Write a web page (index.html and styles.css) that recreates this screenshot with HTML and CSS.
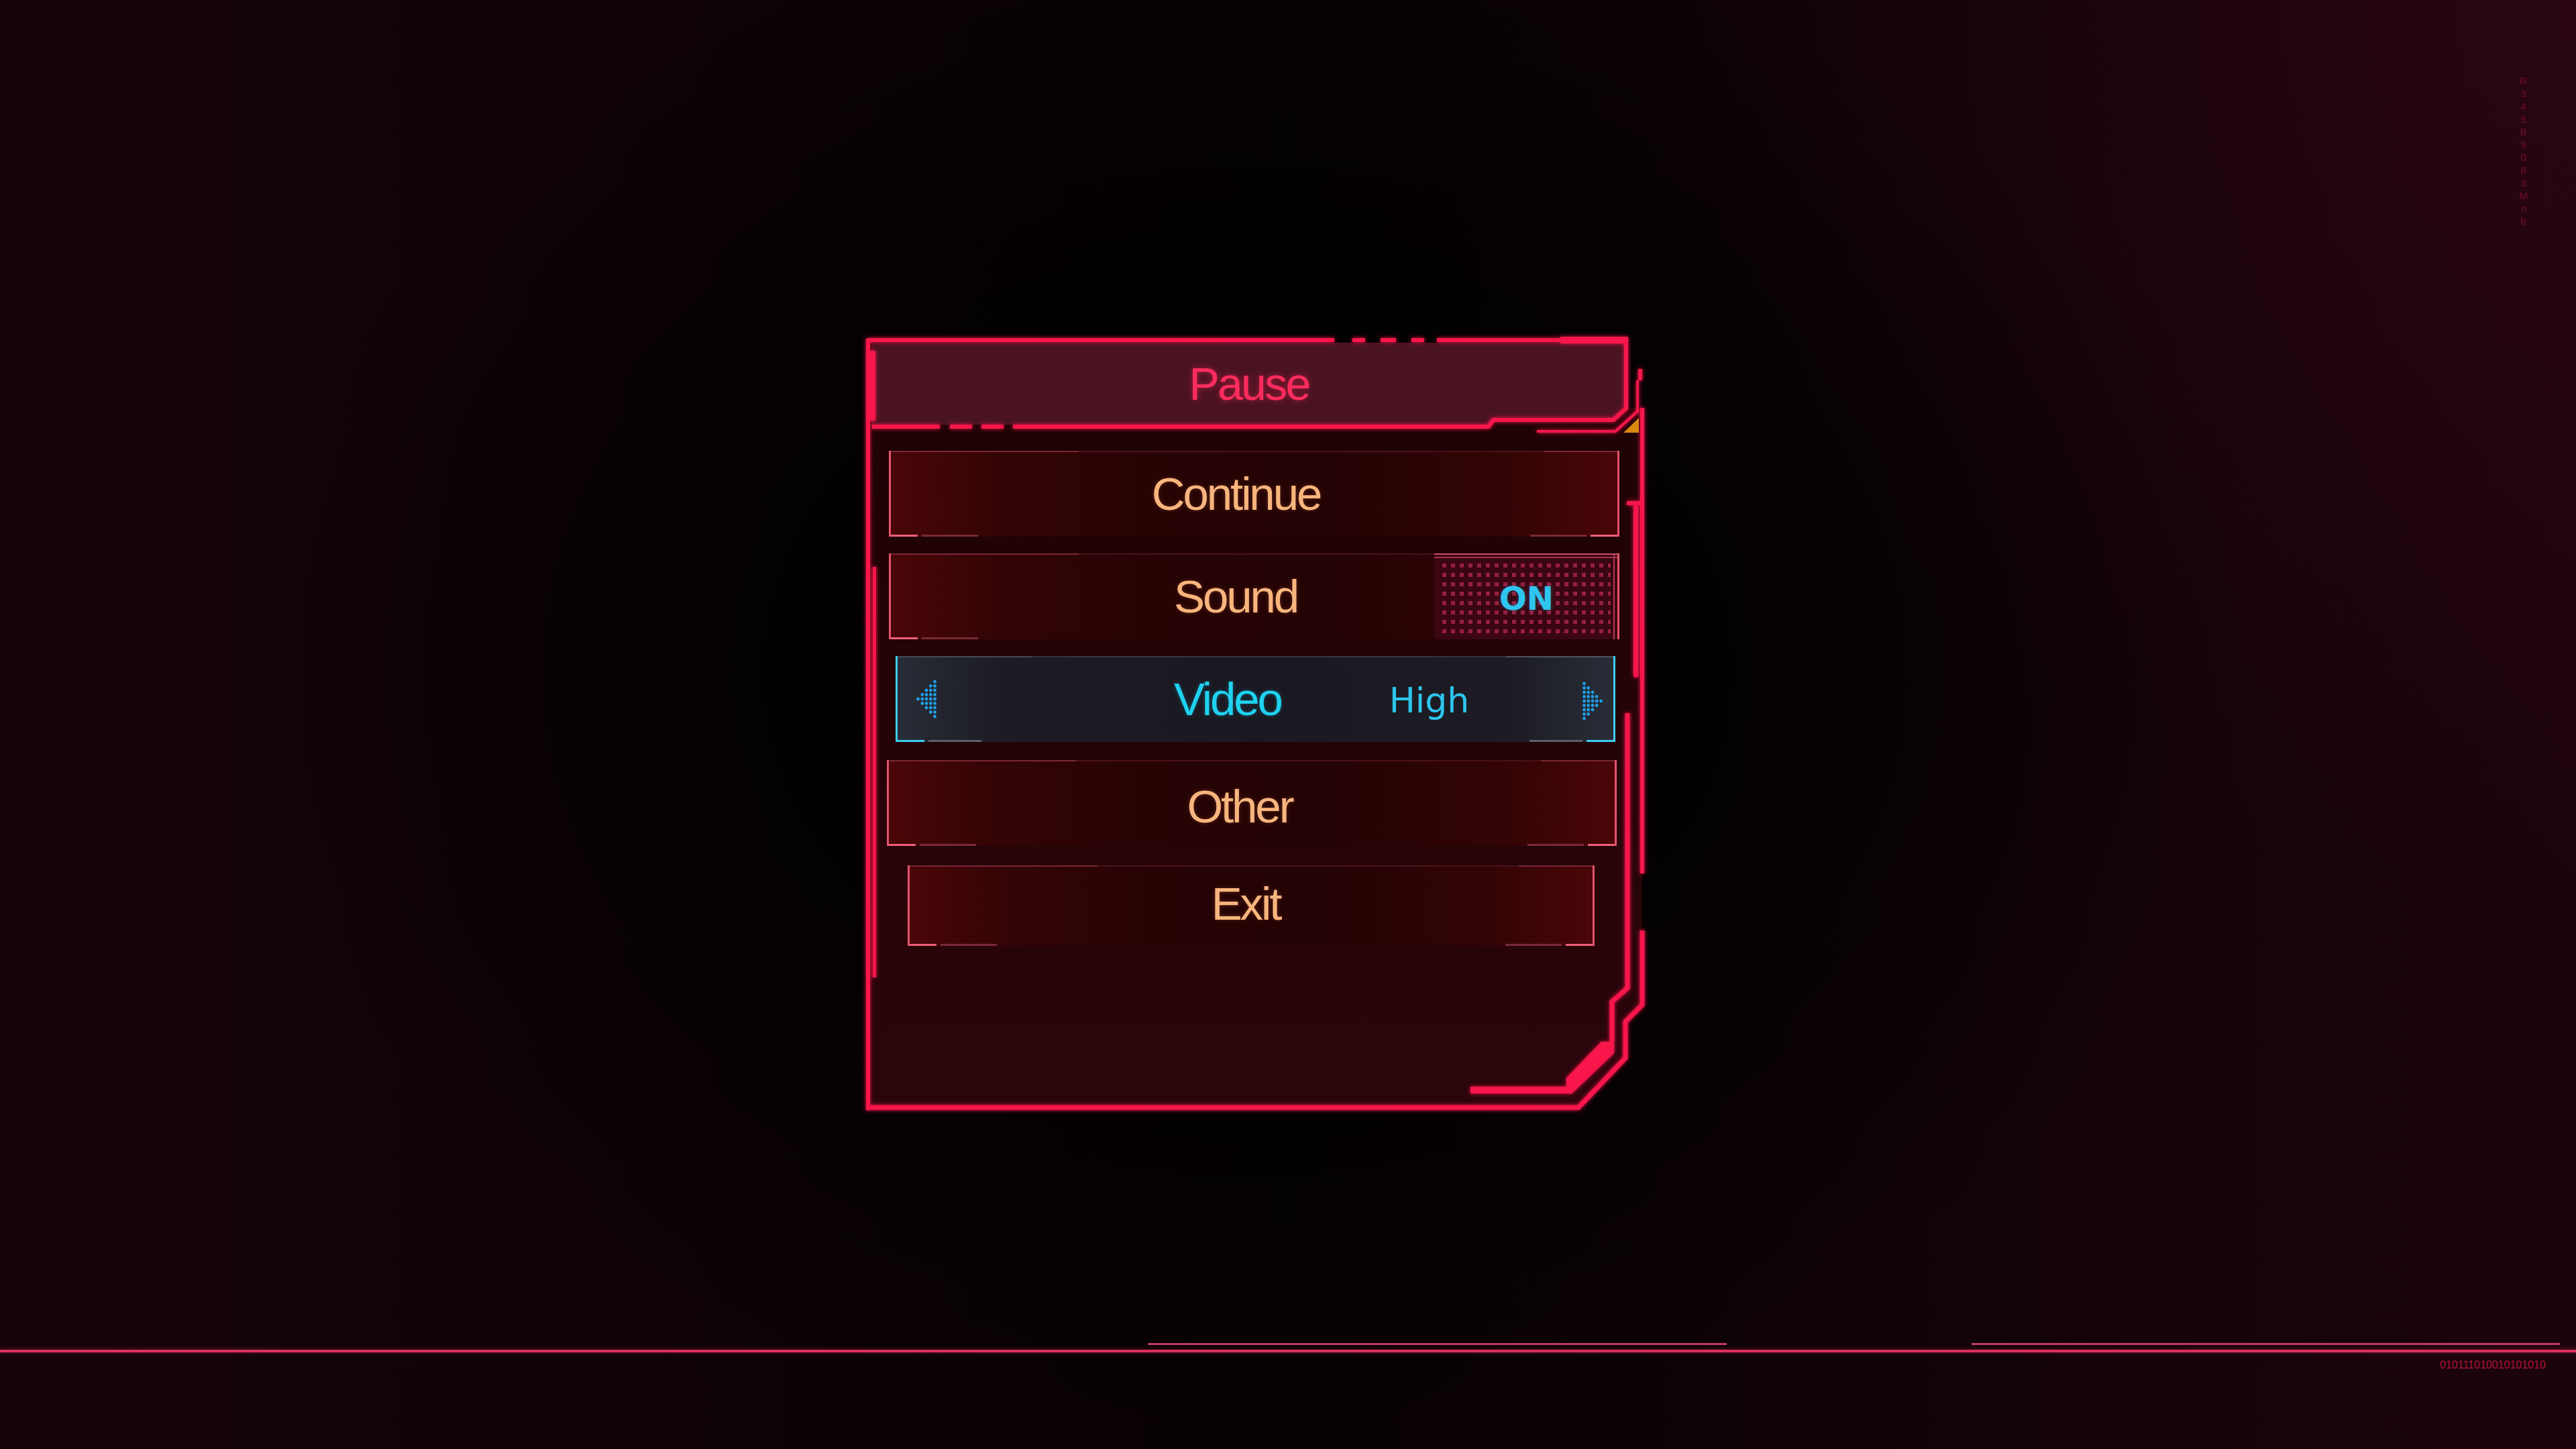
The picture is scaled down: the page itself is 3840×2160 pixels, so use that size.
FILE: index.html
```html
<!DOCTYPE html>
<html lang="en">
<head>
    <meta charset="UTF-8">
    <meta name="viewport" content="width=device-width, initial-scale=1.0">
    <title>Pause</title>
    <link rel="stylesheet" href="styles.css">
</head>
<body>

<div class="screen">
    <div class="stage">

        <!-- Pause panel -->
        <div class="panel">
            <svg class="frame" width="1161" height="1154" viewBox="0 0 1161 1154">
                <defs>
                    <linearGradient id="panelFill" x1="0" y1="0" x2="0" y2="1">
                        <stop offset="0" stop-color="#1d0204"/>
                        <stop offset="1" stop-color="#2b050a"/>
                    </linearGradient>
                    <filter id="glow" x="-5%" y="-5%" width="110%" height="110%">
                        <feGaussianBlur stdDeviation="3" result="blur"/>
                        <feMerge>
                            <feMergeNode in="blur"/>
                            <feMergeNode in="SourceGraphic"/>
                        </feMerge>
                    </filter>
                </defs>

                <polygon fill="url(#panelFill)" points="3,8 1136,8 1136,106 1157,106 1157,996 1134,1021 1134,1075 1062,1150 3,1150"/>
                <polygon fill="#4a1321" points="9,9 1133,9 1133,106 1114,121 935,121 928,131 9,131"/>

                <g filter="url(#glow)" fill="#f8124c" stroke="#f8124c">
                    <!-- top edge -->
                    <path fill="none" stroke-width="6" d="M3 5H698 M725 5H744 M767 5H790 M813 5H832 M851 5H1036"/>
                    <rect x="1035" y="0" width="101" height="10" stroke="none"/>
                    <!-- header right and bottom edge -->
                    <path fill="none" stroke-width="6" d="M1133 8V107L1114 124H935L928 134H219 M205 134H172 M158 134H125 M110 134H9"/>
                    <rect x="0" y="21" width="14" height="104" stroke="none"/>
                    <!-- left rails -->
                    <rect x="0" y="3" width="6" height="1150" stroke="none"/>
                    <rect x="10" y="343" width="5" height="612" stroke="none"/>
                    <!-- outer bottom and right -->
                    <path fill="none" stroke-width="7" d="M3 1149H1062L1132 1075V1021L1157 996V885"/>
                    <path fill="none" stroke-width="6" d="M1157 800V106"/>
                    <!-- right top bits -->
                    <rect x="1151" y="48" width="6" height="17" stroke="none"/>
                    <path fill="none" stroke-width="4" d="M1150 65V111L1117 141H1000"/>
                    <!-- inner right rails -->
                    <rect x="1134" y="245" width="20" height="6" stroke="none"/>
                    <rect x="1144" y="251" width="7" height="257" rx="3" stroke="none"/>
                    <path fill="none" stroke-width="7" d="M1135 561V971L1112 991V1051"/>
                    <polygon stroke="none" points="901,1118 1044,1118 1044,1105 1096,1051 1115,1051 1115,1068 1052,1128 901,1128"/>
                </g>

                <polygon fill="#d8890f" points="1129,143 1152,121 1152,143"/>
            </svg>

            <div class="panel-head">
                <span class="title">Pause</span>
            </div>

            <div class="menu">
                <div class="item item-continue">
                    <span class="label">Continue</span>
                </div>

                <div class="item item-sound">
                    <span class="label">Sound</span>
                    <div class="toggle">
                        <div class="toggle-dots"><span class="toggle-text">ON</span></div>
                    </div>
                </div>

                <div class="item item-video">
                    <svg class="arrow" width="30" height="60" viewBox="0 0 30 60">
                        <g fill="#1f9fe6">
                            <circle cx="2.5" cy="30" r="2.4"/>
                            <circle cx="8.8" cy="23.5" r="2.4"/><circle cx="8.8" cy="30" r="2.4"/><circle cx="8.8" cy="36.5" r="2.4"/>
                            <circle cx="15" cy="17" r="2.4"/><circle cx="15" cy="23.5" r="2.4"/><circle cx="15" cy="30" r="2.4"/><circle cx="15" cy="36.5" r="2.4"/><circle cx="15" cy="43" r="2.4"/>
                            <circle cx="21.3" cy="10.5" r="2.4"/><circle cx="21.3" cy="17" r="2.4"/><circle cx="21.3" cy="23.5" r="2.4"/><circle cx="21.3" cy="30" r="2.4"/><circle cx="21.3" cy="36.5" r="2.4"/><circle cx="21.3" cy="43" r="2.4"/><circle cx="21.3" cy="49.5" r="2.4"/>
                            <circle cx="27.5" cy="4" r="2.4"/><circle cx="27.5" cy="10.5" r="2.4"/><circle cx="27.5" cy="17" r="2.4"/><circle cx="27.5" cy="23.5" r="2.4"/><circle cx="27.5" cy="30" r="2.4"/><circle cx="27.5" cy="36.5" r="2.4"/><circle cx="27.5" cy="43" r="2.4"/><circle cx="27.5" cy="49.5" r="2.4"/><circle cx="27.5" cy="56" r="2.4"/>
                        </g>
                    </svg>
                    <span class="label">Video</span>
                    <span class="value">High</span>
                    <svg class="arrow arrow-right" width="30" height="60" viewBox="0 0 30 60">
                        <g fill="#1f9fe6" transform="translate(30 0) scale(-1 1)">
                            <circle cx="2.5" cy="30" r="2.4"/>
                            <circle cx="8.8" cy="23.5" r="2.4"/><circle cx="8.8" cy="30" r="2.4"/><circle cx="8.8" cy="36.5" r="2.4"/>
                            <circle cx="15" cy="17" r="2.4"/><circle cx="15" cy="23.5" r="2.4"/><circle cx="15" cy="30" r="2.4"/><circle cx="15" cy="36.5" r="2.4"/><circle cx="15" cy="43" r="2.4"/>
                            <circle cx="21.3" cy="10.5" r="2.4"/><circle cx="21.3" cy="17" r="2.4"/><circle cx="21.3" cy="23.5" r="2.4"/><circle cx="21.3" cy="30" r="2.4"/><circle cx="21.3" cy="36.5" r="2.4"/><circle cx="21.3" cy="43" r="2.4"/><circle cx="21.3" cy="49.5" r="2.4"/>
                            <circle cx="27.5" cy="4" r="2.4"/><circle cx="27.5" cy="10.5" r="2.4"/><circle cx="27.5" cy="17" r="2.4"/><circle cx="27.5" cy="23.5" r="2.4"/><circle cx="27.5" cy="30" r="2.4"/><circle cx="27.5" cy="36.5" r="2.4"/><circle cx="27.5" cy="43" r="2.4"/><circle cx="27.5" cy="49.5" r="2.4"/><circle cx="27.5" cy="56" r="2.4"/>
                        </g>
                    </svg>
                </div>

                <div class="item item-other">
                    <span class="label">Other</span>
                </div>

                <div class="item item-exit">
                    <span class="label">Exit</span>
                </div>
            </div>
        </div>

        <div class="serial">R345B9083Mnb</div>
    </div>

    <!-- bottom rails -->
    <div class="footer">
        <div class="rail-upper">
            <span class="rail-seg rail-seg-a"></span>
            <span class="rail-seg rail-seg-b"></span>
        </div>
        <div class="rail-main"></div>
        <div class="binary">010111010010101010</div>
    </div>
</div>

</body>
</html>
```

FILE: styles.css
```css
* {
    margin: 0;
    padding: 0;
    box-sizing: border-box;
}

body {
    background: #000;
    font-family: "Liberation Sans", Arial, sans-serif;
    overflow: hidden;
}

.screen {
    width: 3840px;
    height: 2160px;
    display: flex;
    flex-direction: column;
    background:
        radial-gradient(ellipse 1500px 1150px at 1860px 1000px, #000 0%, rgba(0, 0, 0, 0.8) 45%, rgba(0, 0, 0, 0) 100%),
        radial-gradient(circle at 100% 0%, rgba(56, 8, 24, 0.45), rgba(0, 0, 0, 0) 30%),
        linear-gradient(90deg, #16040a 0%, #0d0205 30%, #070103 50%, #110307 75%, #1d040c 100%);
}

.stage {
    height: 2002px;
    display: flex;
    align-items: flex-start;
}

/* ---------- panel ---------- */

.panel {
    position: relative;
    width: 1161px;
    height: 1154px;
    margin: 502px 0 0 1291px;
    display: flex;
    flex-direction: column;
}

.frame {
    position: absolute;
    top: 0;
    left: 0;
    overflow: visible;
    z-index: 0;
}

.panel-head {
    position: relative;
    z-index: 1;
    margin: 9px 0 0 9px;
    width: 1124px;
    height: 122px;
    display: flex;
    align-items: center;
    justify-content: center;
}

.title {
    font-size: 68px;
    letter-spacing: -0.04em;
    color: #ff2c5e;
    text-shadow: 0 0 10px rgba(255, 40, 90, 0.55);
}

.menu {
    position: relative;
    z-index: 1;
    margin-top: 39px;
    display: flex;
    flex-direction: column;
    align-items: flex-start;
    gap: 25px;
}

.item {
    height: 128px;
    display: flex;
    align-items: center;
    justify-content: center;
    border-left: 3px solid #e4536c;
    border-right: 3px solid #e4536c;
    background:
        linear-gradient(90deg, #f0607a 0 40px, transparent 40px 46px, #7a2a35 46px 130px, transparent 130px calc(100% - 130px), #7a2a35 calc(100% - 130px) calc(100% - 46px), transparent calc(100% - 46px) calc(100% - 40px), #f0607a calc(100% - 40px)) bottom / 100% 3px no-repeat,
        linear-gradient(90deg, #7a2634 0 280px, #4a1018 280px calc(100% - 110px), #7a2634 calc(100% - 110px)) top / 100% 2px no-repeat,
        linear-gradient(90deg, #4a0608 0%, #330405 15%, #260304 40%, #240304 60%, #330405 85%, #4a0608 100%);
}

.label {
    font-size: 69px;
    line-height: 1;
    letter-spacing: -0.045em;
    color: #f8b57d;
    text-shadow: 0 0 6px rgba(248, 150, 90, 0.25);
}

.item-continue {
    margin-left: 34px;
    width: 1089px;
    padding-right: 54px;
}

.item-sound {
    margin-left: 34px;
    width: 1089px;
    justify-content: flex-start;
}

.item-sound .label {
    margin-left: 422px;
}

.toggle {
    margin-left: auto;
    align-self: stretch;
    width: 273px;
    display: flex;
    padding: 12px 10px 6px 12px;
    background:
        linear-gradient(#d04c66 0 2px, transparent 2px 5px, #a2344c 5px 7px, transparent 7px) top / 100% 7px no-repeat,
        linear-gradient(90deg, transparent calc(100% - 6px), #b03a52 calc(100% - 6px) calc(100% - 4px), transparent calc(100% - 4px)),
        #3a0611;
}

.toggle-dots {
    flex: 1;
    display: flex;
    align-items: center;
    justify-content: center;
    background:
        linear-gradient(180deg, transparent 0 6px, #3a0611 6px) 0 3px / 13px 14px,
        linear-gradient(90deg, #961f40 0 6px, #3a0611 6px) 0 3px / 13px 14px;
}

.toggle-text {
    font-family: "DejaVu Sans", Verdana, sans-serif;
    font-weight: bold;
    font-size: 48px;
    line-height: 1;
    color: #2ec6ef;
    text-shadow: 0 0 6px rgba(40, 190, 240, 0.35);
}

.item-video {
    margin-left: 44px;
    width: 1073px;
    justify-content: flex-start;
    border-left-color: #3ccff2;
    border-right-color: #3ccff2;
    background:
        linear-gradient(90deg, #3ccff2 0 40px, transparent 40px 46px, #5a6068 46px 125px, transparent 125px calc(100% - 125px), #5a6068 calc(100% - 125px) calc(100% - 46px), transparent calc(100% - 46px) calc(100% - 40px), #3ccff2 calc(100% - 40px)) bottom / 100% 3px no-repeat,
        linear-gradient(90deg, #474b55 0 200px, #34363e 200px calc(100% - 160px), #50545e calc(100% - 160px)) top / 100% 2px no-repeat,
        linear-gradient(90deg, #282d37 0%, #1d1c24 14%, #1a1820 50%, #1d1c24 86%, #282d37 100%);
}

.arrow {
    margin-left: 28px;
    flex-shrink: 0;
}

.item-video .label {
    margin-left: 354px;
    color: #1fd2f0;
    text-shadow: 0 0 6px rgba(30, 200, 240, 0.3);
}

.value {
    margin-left: 161px;
    font-family: "DejaVu Sans", Verdana, sans-serif;
    font-size: 52px;
    line-height: 1;
    color: #2cc6ee;
    padding-top: 4px;
}

.arrow-right {
    margin-left: auto;
    margin-right: 16px;
    margin-top: 6px;
}

.item-other {
    margin-left: 31px;
    margin-top: 2px;
    width: 1088px;
    padding-right: 36px;
    padding-top: 10px;
}

.item-exit {
    margin-left: 62px;
    margin-top: 4px;
    width: 1024px;
    height: 120px;
    padding-right: 16px;
    padding-bottom: 6px;
}

/* ---------- decorations ---------- */

.serial {
    margin: 112px 70px 0 auto;
    writing-mode: vertical-rl;
    text-orientation: upright;
    font-size: 15px;
    letter-spacing: 2px;
    color: #6e0c2e;
}

.footer {
    display: flex;
    flex-direction: column;
}

.rail-upper {
    height: 3px;
    display: flex;
}

.rail-seg {
    height: 3px;
    background: #bf3a62;
}

.rail-seg-a {
    margin-left: 1711px;
    width: 863px;
}

.rail-seg-b {
    margin-left: 365px;
    width: 877px;
}

.rail-main {
    margin-top: 7px;
    height: 4px;
    background: #d8315f;
    box-shadow: 0 0 6px rgba(220, 40, 90, 0.5);
}

.binary {
    margin: 11px 0 0 3637px;
    font-size: 16px;
    line-height: 16px;
    color: #b0123e;
}
```
